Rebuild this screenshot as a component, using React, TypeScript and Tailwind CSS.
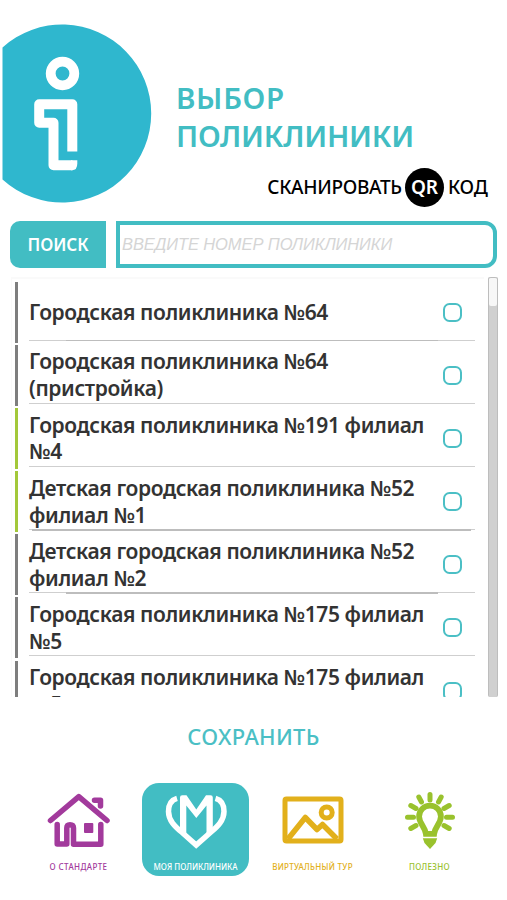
import { useState } from 'react'
import clsx from 'clsx'

const clinics = [
  { id: 1, lines: ['Городская поликлиника №64'], kids: false, rule: 'short' },
  { id: 2, lines: ['Городская поликлиника №64', '(пристройка)'], kids: false, rule: 'thin' },
  { id: 3, lines: ['Городская поликлиника №191 филиал', '№4'], kids: true, rule: 'thin' },
  { id: 4, lines: ['Детская городская поликлиника №52', 'филиал №1'], kids: true, rule: 'bold' },
  { id: 5, lines: ['Детская городская поликлиника №52', 'филиал №2'], kids: false, rule: 'short' },
  { id: 6, lines: ['Городская поликлиника №175 филиал', '№5'], kids: false, rule: 'thin' },
  { id: 7, lines: ['Городская поликлиника №175 филиал', '№5'], kids: false, rule: 'thin' },
]

function InfoLogo() {
  return (
    <svg className="block shrink-0" width="155" height="204" viewBox="0 0 155 204">
      <path d="M2.5 47.5A89 89 0 1 1 2.5 179.500Z" fill="#2fb7ce" />
      <circle cx="62.500" cy="73.500" r="11.800" fill="none" stroke="#fff" strokeWidth="9.800" />
      <path
        d="M72.300 151.500V104.200H39.200V122.700H53.500V165.300H72.500"
        fill="none" stroke="#fff" strokeWidth="10" strokeLinejoin="round"
      />
      <path d="M71 160.300H77.300V163.500Q77.300 170.300 72 170.300H71Z" fill="#fff" />
    </svg>
  )
}

function HouseIcon() {
  return (
    <svg width="64" height="56" viewBox="1 0 64 56" fill="none" stroke="#a23a9c" strokeWidth="5.500" strokeLinecap="round" strokeLinejoin="round">
      <path d="M4.500 28.500L32.800 4.700L61 28.500" />
      <path d="M48.500 8.300H54.500V14" strokeWidth="5.500" />
      <path d="M11.200 32.500V52H20.800V36Q20.800 32.700 24 32.700Q27.500 32.700 27.500 36V52.200H54.800V32.500" />
      <path d="M39 32H46.300V40H39Z" fill="#a23a9c" strokeWidth="2" />
    </svg>
  )
}

function HeartIcon() {
  return (
    <svg width="64" height="58" viewBox="0 0 64 58" fill="none" stroke="#fff" strokeWidth="5.500">
      <path d="M16 42V6.500Q16 4.200 18.300 4.200H22.500L32.300 18.500L42 4.200H46.500Q48.800 4.200 48.800 6.500V42L42.500 46V14.500L32.300 27L22.300 14.500V46Z" fill="#fff" stroke="none" />
      <path d="M13 7.300C7 9 4.500 14.500 4.500 20.500C4.500 29.500 11 35.500 17.500 41L32.200 54L47 41C53.500 35.500 60 29.500 60 20.500C60 14.500 57.500 9 51.500 7.300" />
    </svg>
  )
}

function PictureIcon() {
  return (
    <svg width="62" height="48" viewBox="0 0 62 48" fill="none" stroke="#e2b01b" strokeWidth="5" strokeLinejoin="round">
      <rect x="3" y="3" width="56" height="42" rx="1.500" />
      <path d="M6 43L23.300 21.500L35 33.500L40.500 28.500L55 43" strokeWidth="5.500" />
      <circle cx="44.700" cy="16.500" r="5.500" />
    </svg>
  )
}

function BulbIcon() {
  return (
    <svg width="52" height="58" viewBox="0 0 52 58" fill="none" stroke="#99c22d" strokeWidth="5" strokeLinecap="round">
      <path d="M26 3.500V9M14.800 6L17.500 11M37.200 6L34.500 11M6.800 14.500L12 17.500M45.200 14.500L40 17.500M3.500 26.300H9.500M42.500 26.300H48.500M6.800 37.500L12 34.500M45.200 37.500L40 34.500" />
      <path d="M26 14.600A10.900 10.900 0 0 0 15.100 25.500C15.100 32.500 21 35.500 21.900 42.800H30.100C31 35.500 36.900 32.500 36.900 25.500A10.900 10.900 0 0 0 26 14.600Z" strokeWidth="5.800" />
      <path d="M18.800 47.300H33.200L31.500 52L26 58L20.500 52Z" fill="#99c22d" stroke="none" />
    </svg>
  )
}

const tabs = [
  { key: 'standard', label: 'О СТАНДАРТЕ', icon: <HouseIcon />, color: 'text-[#a23a9c]', text: 'tracking-[0.4px]' },
  { key: 'clinic', label: 'МОЯ ПОЛИКЛИНИКА', icon: <HeartIcon />, color: 'text-white bg-[#42bdc3]', text: 'tracking-[0px]' },
  { key: 'tour', label: 'ВИРТУАЛЬНЫЙ ТУР', icon: <PictureIcon />, color: 'text-[#e2b01b]', text: 'tracking-[0.3px]' },
  { key: 'useful', label: 'ПОЛЕЗНО', icon: <BulbIcon />, color: 'text-[#99c22d]', text: 'tracking-[0.3px]' },
]

export default function App() {
  const [query, setQuery] = useState('')
  const [selected, setSelected] = useState<number | null>(null)

  return (
    <div className="w-[507px] h-[900px] overflow-hidden bg-white flex flex-col font-['Noto_Sans',sans-serif]">
      <div className="flex h-[221px] shrink-0">
        <InfoLogo />
        <div className="flex-1 pt-[79px] pl-[21px]">
          <h1 className="text-[29.500px] leading-[37.500px] font-semibold text-[#42bdc3] whitespace-nowrap">
            <span className="block tracking-[0.7px]">ВЫБОР</span>
            <span className="block tracking-[-0.250px]">ПОЛИКЛИНИКИ</span>
          </h1>
          <button className="flex items-center mt-[14px] ml-[90px] text-[19px] font-medium text-black whitespace-nowrap">
            <span className="w-[137px] tracking-[-0.300px]">СКАНИРОВАТЬ</span>
            <span className="w-[39px] h-[39px] ml-[2px] mr-[4px] rounded-full bg-black text-white font-semibold flex items-center justify-center">QR</span>
            <span className="tracking-[-0.3px]">КОД</span>
          </button>
        </div>
      </div>

      <div className="flex h-[47px] shrink-0 pl-[10px]">
        <button className="w-[96px] rounded-l-[10px] bg-[#42bdc3] text-white text-[17px] font-semibold tracking-[-0.1px]">ПОИСК</button>
        <input
          className="ml-[10px] w-[381px] border-4 border-[#42bdc3] rounded-r-[12px] pl-[2px] text-[16.500px] tracking-[-0.1px] italic outline-none placeholder:text-[#d5d5d5] font-['Liberation_Sans',sans-serif]"
          placeholder="ВВЕДИТЕ НОМЕР ПОЛИКЛИНИКИ"
          value={query}
          onChange={e => setQuery(e.target.value)}
        />
      </div>

      <div className="flex h-[420px] mt-[9px] shrink-0">
        <div className="w-[473px] ml-[11px] mr-[4px] pt-[2.500px] pl-[3px] overflow-hidden border-l border-t-2 border-[#fafafa]">
          {clinics.map(c => (
            <div
              key={c.id}
              className={clsx('flex h-[61px] mb-[2.200px] border-l-[3.500px]', c.kids ? 'border-[#a3c83a]' : 'border-[#7e7e7e]')}
              onClick={() => setSelected(c.id)}
            >
              <div className="relative flex w-[446px] ml-[11px] items-center justify-between pr-[13px]">
                <div className="text-[21px] leading-[26.700px] tracking-[-0.390px] font-semibold text-[#333] whitespace-nowrap">
                  {c.lines.map(l => <div key={l}>{l}</div>)}
                </div>
                <span className={clsx('w-[19px] h-[19px] shrink-0 rounded-[6.500px] border-2 border-[#4bbfc5]', selected === c.id && 'bg-[#42bdc3]')} />
                <span className="absolute left-0 right-0 bottom-[2px] h-px bg-[#cfcfcf]" />
                {c.rule !== 'thin' && (
                  <span className={clsx('absolute bottom-[1.500px] h-[1.500px] bg-[#bdbdbd]', c.rule === 'short' ? 'left-[37px] right-[37px]' : 'left-[3px] right-[4px]')} />
                )}
              </div>
            </div>
          ))}
        </div>
        <div className="w-[10px] rounded-[2px] bg-[#d0d0d0] border-x border-[#bdbdbd]">
          <div className="h-[29px] rounded-[2px] bg-[#f7f7f7] border-t border-[#bdbdbd]" />
        </div>
      </div>

      <button className="mt-[22px] h-[34px] shrink-0 self-center text-[22px] leading-[34px] font-medium text-[#4bbfc5] whitespace-nowrap tracking-[0.3px]">СОХРАНИТЬ</button>

      <nav className="flex gap-[10px] mt-[30px] pl-[25px]">
        {tabs.map(t => (
          <button key={t.key} className={clsx('w-[107px] h-[93px] shrink-0 rounded-[17px] flex flex-col items-center', t.color)}>
            <span className="h-[74px] flex items-center justify-center">{t.icon}</span>
            <span className={clsx('mt-[5px] text-[8px] leading-[10px] font-medium whitespace-nowrap', t.text)}>{t.label}</span>
          </button>
        ))}
      </nav>
    </div>
  )
}
